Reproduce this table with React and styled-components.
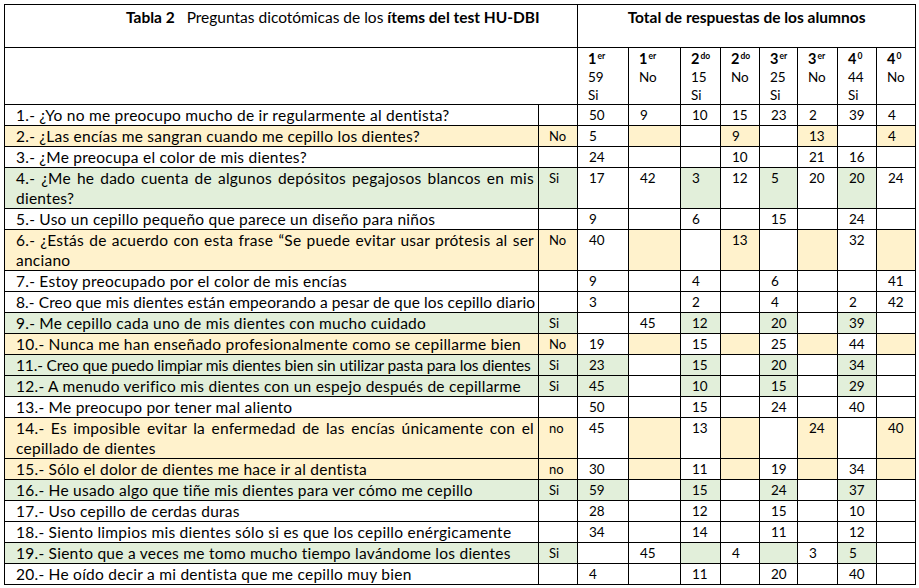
import React from "react";
import styled, { createGlobalStyle } from "styled-components";

const Global = createGlobalStyle`
body {
  margin: 0;
  background: #FFFFFF;
}
`;

const Page = styled.div`
padding: 4px 0 0 4px;
`;

const Table = styled.table`
border-collapse: collapse;
table-layout: fixed;
width: 911px;
font-family: Lato, "Liberation Sans", sans-serif;
font-size: 13.5px;
color: #000000;
`;

const fills = {
  o: "#FFF2CC",
  g: "#E2EFDA",
};

const Row = styled.tr`
height: ${(p) => p.$h}px;
`;

const Th = styled.th`
border: 1px solid #000000;
padding: ${(p) => p.$pad || "2px 0 0 0"};
vertical-align: top;
text-align: ${(p) => p.$align || "left"};
font-size: 15.5px;
font-weight: 400;
line-height: 20px;
`;

const Bold = styled.b`
font-weight: 700;
`;

const Level = styled.th`
border: 1px solid #000000;
padding: 2px 0 0 10px;
vertical-align: top;
text-align: left;
font-weight: 400;
line-height: 18px;
`;

const Ord = styled.span`
display: block;
font-weight: 700;
font-size: 14.5px;

sup {
  font-size: 8.5px;
  line-height: 0;
  vertical-align: 5px;
  margin-left: 1px;
}
`;

const Line = styled.span`
display: block;
`;

const Cell = styled.td`
border: 1px solid #000000;
padding: 0 4px 0 11px;
vertical-align: top;
line-height: 20px;
white-space: nowrap;
background: ${(p) => fills[p.$fill] || "#FFFFFF"};
`;

const Question = styled(Cell)`
white-space: ${(p) => (p.$wrap ? "normal" : "nowrap")};
text-align: justify;
font-size: 15.5px;
letter-spacing: ${(p) => p.$ls ?? 0.25}px;
`;

const Full = styled.span`
display: block;
text-align: justify;
text-align-last: justify;
`;

const Mark = styled(Cell)`
padding-left: 10px;
font-size: 13px;
`;

const levels = [
  ["1", "er", "59", "Si"],
  ["1", "er", "No"],
  ["2", "do", "15", "Si"],
  ["2", "do", "No"],
  ["3", "er", "25", "Si"],
  ["3", "er", "No"],
  ["4", "0", "44", "Si"],
  ["4", "0", "No"],
];

const rows = [
  { q: ["1.- ¿Yo no me preocupo mucho de ir regularmente al dentista?"], m: "", v: ["50", "9", "10", "15", "23", "2", "39", "4"], f: "........" },
  { q: ["2.- ¿Las encías me sangran cuando me cepillo los dientes?"], m: "No", t: "o", v: ["5", "", "", "9", "", "13", "", "4"], f: ".o.o.o.o" },
  { q: ["3.- ¿Me preocupa el color de mis dientes?"], m: "", v: ["24", "", "", "10", "", "21", "16", ""], f: "........" },
  { q: ["4.- ¿Me he dado cuenta de algunos depósitos pegajosos blancos en mis", "dientes?"], m: "Si", t: "g", v: ["17", "42", "3", "12", "5", "20", "20", "24"], f: "..g.g.g." },
  { q: ["5.- Uso un cepillo pequeño que parece un diseño para niños"], m: "", v: ["9", "", "6", "", "15", "", "24", ""], f: "........" },
  { q: ["6.- ¿Estás de acuerdo con esta frase “Se puede evitar usar prótesis al ser", "anciano"], m: "No", t: "o", v: ["40", "", "", "13", "", "", "32", ""], f: ".o.o.o.o" },
  { q: ["7.- Estoy preocupado por el color de mis encías"], m: "", v: ["9", "", "4", "", "6", "", "", "41"], f: "........" },
  { q: ["8.- Creo que mis dientes están empeorando a pesar de que los cepillo diario"], m: "", v: ["3", "", "2", "", "4", "", "2", "42"], f: "........", ls: 0.1 },
  { q: ["9.- Me cepillo cada uno de mis dientes con mucho cuidado"], m: "Si", t: "g", v: ["", "45", "12", "", "20", "", "39", ""], f: "..g.g.g." },
  { q: ["10.- Nunca me han enseñado profesionalmente como se cepillarme bien"], m: "No", t: "o", v: ["19", "", "15", "", "25", "", "44", ""], f: ".o.o.o.o" },
  { q: ["11.- Creo que puedo limpiar mis dientes bien sin utilizar pasta para los dientes"], m: "Si", t: "g", v: ["23", "", "15", "", "20", "", "34", ""], f: "g.g.g.g.", ls: -0.15 },
  { q: ["12.- A menudo verifico mis dientes con un espejo después de cepillarme"], m: "Si", t: "g", v: ["45", "", "10", "", "15", "", "29", ""], f: "g.g.g.g." },
  { q: ["13.- Me preocupo por tener mal aliento"], m: "", v: ["50", "", "15", "", "24", "", "40", ""], f: "........" },
  { q: ["14.- Es imposible evitar la enfermedad de las encías únicamente con el", "cepillado de dientes"], m: "no", t: "o", v: ["45", "", "13", "", "", "24", "", "40"], f: ".o.o.o.o" },
  { q: ["15.- Sólo el dolor de dientes me hace ir al dentista"], m: "no", t: "o", v: ["30", "", "11", "", "19", "", "34", ""], f: ".o.o.o.o" },
  { q: ["16.- He usado algo que tiñe mis dientes para ver cómo me cepillo"], m: "Si", t: "g", v: ["59", "", "15", "", "24", "", "37", ""], f: "g.g.g.g." },
  { q: ["17.- Uso cepillo de cerdas duras"], m: "", v: ["28", "", "12", "", "15", "", "10", ""], f: "........" },
  { q: ["18.- Siento limpios mis dientes sólo si es que los cepillo enérgicamente"], m: "", v: ["34", "", "14", "", "11", "", "12", ""], f: "........" },
  { q: ["19.- Siento que a veces me tomo mucho tiempo lavándome los dientes"], m: "Si", t: "g", v: ["", "45", "", "4", "", "3", "5", ""], f: "..g.g.g." },
  { q: ["20.- He oído decir a mi dentista que me cepillo muy bien"], m: "", v: ["4", "", "11", "", "20", "", "40", ""], f: "........" },
];

const widths = [534, 39, 51, 52, 40, 39, 38, 40, 39, 39];

export default function App() {
  return (
    <Page>
      <Global />
      <Table>
        <colgroup>
          {widths.map((w, i) => (
            <col key={i} style={{ width: w }} />
          ))}
        </colgroup>
        <thead>
          <Row $h={43}>
            <Th colSpan={2} $pad="2px 0 0 121px">
              <Bold>Tabla 2</Bold>&nbsp;&nbsp; Preguntas dicotómicas de los <Bold>ítems del test HU-DBI</Bold>
            </Th>
            <Th colSpan={8} $align="center">
              <Bold>Total de respuestas de los alumnos</Bold>
            </Th>
          </Row>
          <Row $h={55}>
            <Level colSpan={2} />
            {levels.map(([n, s, ...rest], i) => (
              <Level key={i}>
                <Ord>
                  {n}
                  <sup>{s}</sup>
                </Ord>
                {rest.map((t, j) => (
                  <Line key={j}>{t}</Line>
                ))}
              </Level>
            ))}
          </Row>
        </thead>
        <tbody>
          {rows.map((r, i) => {
            const wrap = r.q.length > 1;
            return (
              <Row key={i} $h={wrap ? 41 : 21}>
                <Question $fill={r.t} $wrap={wrap} $ls={r.ls}>
                  {wrap ? (
                    <>
                      <Full>{r.q[0]}</Full>
                      {r.q[1]}
                    </>
                  ) : (
                    r.q[0]
                  )}
                </Question>
                <Mark $fill={r.t}>{r.m}</Mark>
                {r.v.map((v, j) => (
                  <Cell key={j} $fill={r.f[j]}>
                    {v}
                  </Cell>
                ))}
              </Row>
            );
          })}
        </tbody>
      </Table>
    </Page>
  );
}
